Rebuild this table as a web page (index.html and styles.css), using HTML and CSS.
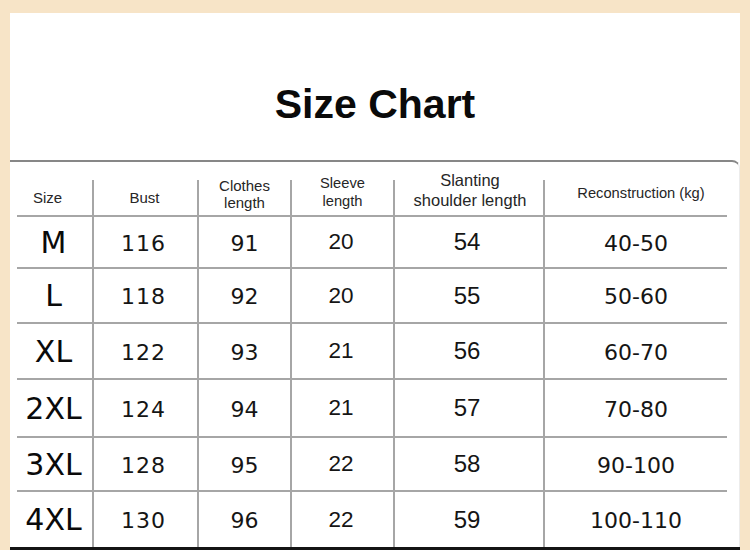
FILE: index.html
```html
<!DOCTYPE html>
<html>
<head>
<meta charset="utf-8">
<link rel="stylesheet" href="styles.css">
</head>
<body>
<div class="panel">
  <div class="title-area"><h1 class="title">Size Chart</h1></div>
  <div class="box">
    <div class="chart">
      <div class="hd hd-low hd-size first">Size</div>
      <div class="hd hd-low">Bust</div>
      <div class="hd hd-clothes">Clothes<br>length</div>
      <div class="hd hd-sleeve">Sleeve<br>length</div>
      <div class="hd hd-slant">Slanting<br>shoulder length</div>
      <div class="hd hd-recon">Reconstruction (kg)</div>

      <div class="c size first">M</div><div class="c bust">116</div><div class="c clo">91</div><div class="c slv">20</div><div class="c sla">54</div><div class="c rec">40-50</div>
      <div class="c size first">L</div><div class="c bust">118</div><div class="c clo">92</div><div class="c slv">20</div><div class="c sla">55</div><div class="c rec">50-60</div>
      <div class="c size first">XL</div><div class="c bust">122</div><div class="c clo">93</div><div class="c slv">21</div><div class="c sla">56</div><div class="c rec">60-70</div>
      <div class="c size first">2XL</div><div class="c bust">124</div><div class="c clo">94</div><div class="c slv">21</div><div class="c sla">57</div><div class="c rec">70-80</div>
      <div class="c size first">3XL</div><div class="c bust">128</div><div class="c clo">95</div><div class="c slv">22</div><div class="c sla">58</div><div class="c rec">90-100</div>
      <div class="c size first last">4XL</div><div class="c bust last">130</div><div class="c clo last">96</div><div class="c slv last">22</div><div class="c sla last">59</div><div class="c rec last">100-110</div>
    </div>
  </div>
</div>
</body>
</html>
```
FILE: styles.css
```css
* { box-sizing: border-box; }
html, body { margin: 0; padding: 0; }
body {
  width: 750px;
  height: 550px;
  background: #f7e4c7;
  overflow: hidden;
  font-family: "Liberation Sans", Arial, sans-serif;
  color: #1a1a1a;
}
.panel {
  margin: 13px 10px 0 10px;
  width: 730px;
  height: 537px;
  background: #fff;
  border-bottom: 3px solid #141414;
  display: flex;
  flex-direction: column;
}
.title-area {
  height: 147px;
  padding-top: 68px;
  text-align: center;
}
.title {
  margin: 0;
  font-family: "Liberation Sans", Arial, sans-serif;
  font-weight: bold;
  font-size: 41px;
  line-height: 47px;
  color: #0a0a0a;
}
.box {
  flex: 1;
  border-top: 2px solid #878787;
  border-right: 1px solid #ececec;
  border-top-right-radius: 8px;
  padding-left: 7px;
}
.chart {
  width: 710px;
  height: 100%;
  display: grid;
  grid-template-columns: 75px 105px 93px 103px 150px 184px;
  grid-template-rows: 55px 52px 55px 56px 58px 54px 1fr;
}
.hd {
  display: flex;
  align-items: center;
  justify-content: center;
  text-align: center;
  border-bottom: 2px solid #a6a6a6;
  color: #262626;
  font-size: 14.7px;
  background: linear-gradient(#a6a6a6, #a6a6a6) no-repeat left bottom / 2px 35px;
}
.hd.first { background: none; }
.hd-low { padding-top: 18px; font-size: 15px; }
.hd-size { padding-right: 14px; }
.hd-clothes { padding-top: 10px; line-height: 17px; font-size: 15px; padding-left: 2px; }
.hd-sleeve { padding-top: 7px; line-height: 18px; padding-left: 2px; }
.hd-slant { padding-top: 3px; line-height: 20px; font-size: 16.5px; padding-left: 4px; }
.hd-recon { padding-top: 8px; padding-left: 12px; }

.c {
  display: flex;
  align-items: center;
  justify-content: center;
  border-bottom: 2px solid #a6a6a6;
  border-left: 2px solid #a6a6a6;
  color: #151515;
  font-family: "DejaVu Sans", sans-serif;
  font-size: 22px;
}
.c.first { border-left: none; }
.c.last { border-bottom: none; }
.size { font-size: 30px; padding-right: 2px; color: #0a0a0a; }
.bust { letter-spacing: 1px; padding-right: 4px; padding-top: 2px; }
.clo { padding-top: 2px; }
.slv { font-family: "Liberation Sans", Arial, sans-serif; font-size: 22.5px; padding-right: 3px; }
.sla { font-family: "Liberation Sans", Arial, sans-serif; font-size: 24px; padding-right: 4px; }
.rec { padding-top: 2px; }
```
